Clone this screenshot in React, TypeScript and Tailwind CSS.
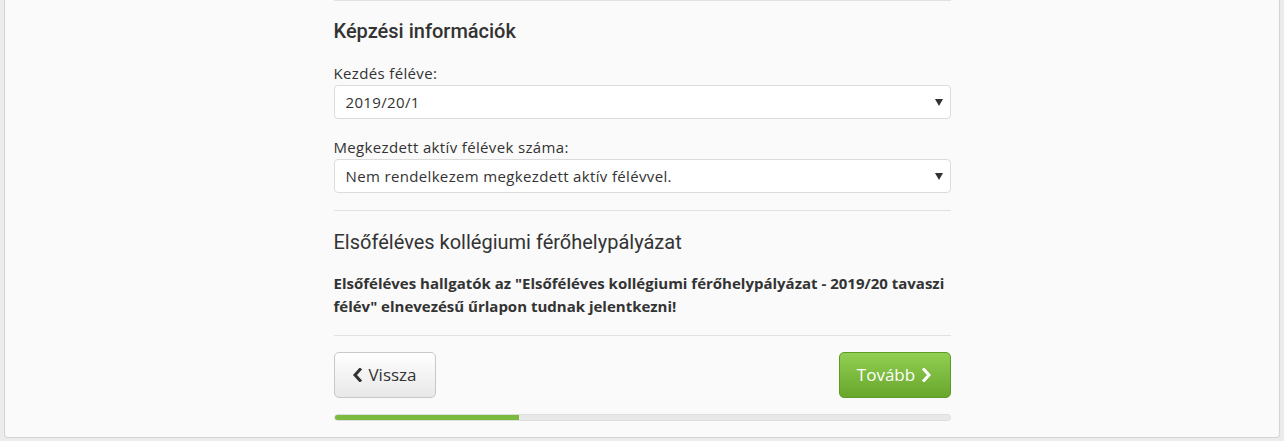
import React from 'react';

const bodyFont = { fontFamily: '"Open Sans", "Noto Sans", sans-serif' };
const headFont = { fontFamily: 'Roboto, "Liberation Sans", sans-serif' };

const Caret: React.FC = () => (
  <svg width="8" height="7" viewBox="0 0 8 7" className="shrink-0">
    <path d="M0 0 H8 L4 7 Z" fill="#333" />
  </svg>
);

const SelectBox: React.FC<{ value: string }> = ({ value }) => (
  <div className="h-[34px] bg-white border border-[#dcdcdc] rounded-[4px] flex items-center justify-between pl-[11px] pr-[7px] text-[15px] tracking-[0.35px] text-[#333]">
    <span>{value}</span>
    <Caret />
  </div>
);

const Chevron: React.FC<{ dir: 'left' | 'right'; color: string }> = ({ dir, color }) => (
  <svg width="11" height="14" viewBox="0 0 11 14">
    <path
      d={dir === 'left' ? 'M8 1.5 L3 7 L8 12.5' : 'M3 1.5 L8 7 L3 12.5'}
      fill="none"
      stroke={color}
      strokeWidth="3"
      strokeLinecap="square"
    />
  </svg>
);

export default function App() {
  return (
    <div className="w-[1284px] h-[441px] bg-[#ececec] px-[4px] overflow-hidden" style={bodyFont}>
      <div className="h-[438px] bg-[#fafafa] border-x border-b border-[#d4d4d4] rounded-b-[4px]">
        <div className="w-[617px] mx-auto text-[#333]">
          <div className="border-t border-[#e2e2e2]" />

          <h3 className="mt-[18px] text-[20px] leading-[24px] font-medium text-[#333]" style={headFont}>
            Képzési információk
          </h3>

          <label className="block mt-[20px] text-[15px] tracking-[0.35px] leading-[20px]">Kezdés féléve:</label>
          <div className="mt-[2px]">
            <SelectBox value="2019/20/1" />
          </div>

          <label className="block mt-[18px] text-[15px] tracking-[0.35px] leading-[20px]">
            Megkezdett aktív félévek száma:
          </label>
          <div className="mt-[2px]">
            <SelectBox value="Nem rendelkezem megkezdett aktív félévvel." />
          </div>

          <div className="mt-[17px] border-t border-[#e2e2e2]" />

          <h3 className="mt-[19px] text-[20px] leading-[24px] text-[#333]" style={headFont}>
            Elsőféléves kollégiumi férőhelypályázat
          </h3>

          <p className="mt-[18px] text-[15px] leading-[23px] font-bold">
            Elsőféléves hallgatók az "Elsőféléves kollégiumi férőhelypályázat - 2019/20 tavaszi félév" elnevezésű
            űrlapon tudnak jelentkezni!
          </p>

          <div className="mt-[17px] border-t border-[#e2e2e2]" />

          <div className="mt-[16px] flex justify-between">
            <button className="w-[102px] h-[46px] flex items-center justify-center gap-[5px] rounded-[5px] border border-[#c8c8c8] bg-gradient-to-b from-white to-[#e8e8e8] text-[17px] text-[#333] shadow-[inset_0_1px_0_rgba(255,255,255,0.8)]">
              <Chevron dir="left" color="#333" />
              <span>Vissza</span>
            </button>
            <button className="w-[112px] h-[46px] flex items-center justify-center gap-[6px] rounded-[5px] border border-[#5e9a26] bg-gradient-to-b from-[#90cf51] to-[#68a72b] text-[17px] text-white">
              <span>Tovább</span>
              <Chevron dir="right" color="#fff" />
            </button>
          </div>

          <div className="mt-[16px] h-[7px] rounded-full bg-[#e8e8e8] border border-[#dedede] overflow-hidden">
            <div className="h-full bg-[#7cba3f]" style={{ width: '30%' }} />
          </div>
        </div>
      </div>
    </div>
  );
}
